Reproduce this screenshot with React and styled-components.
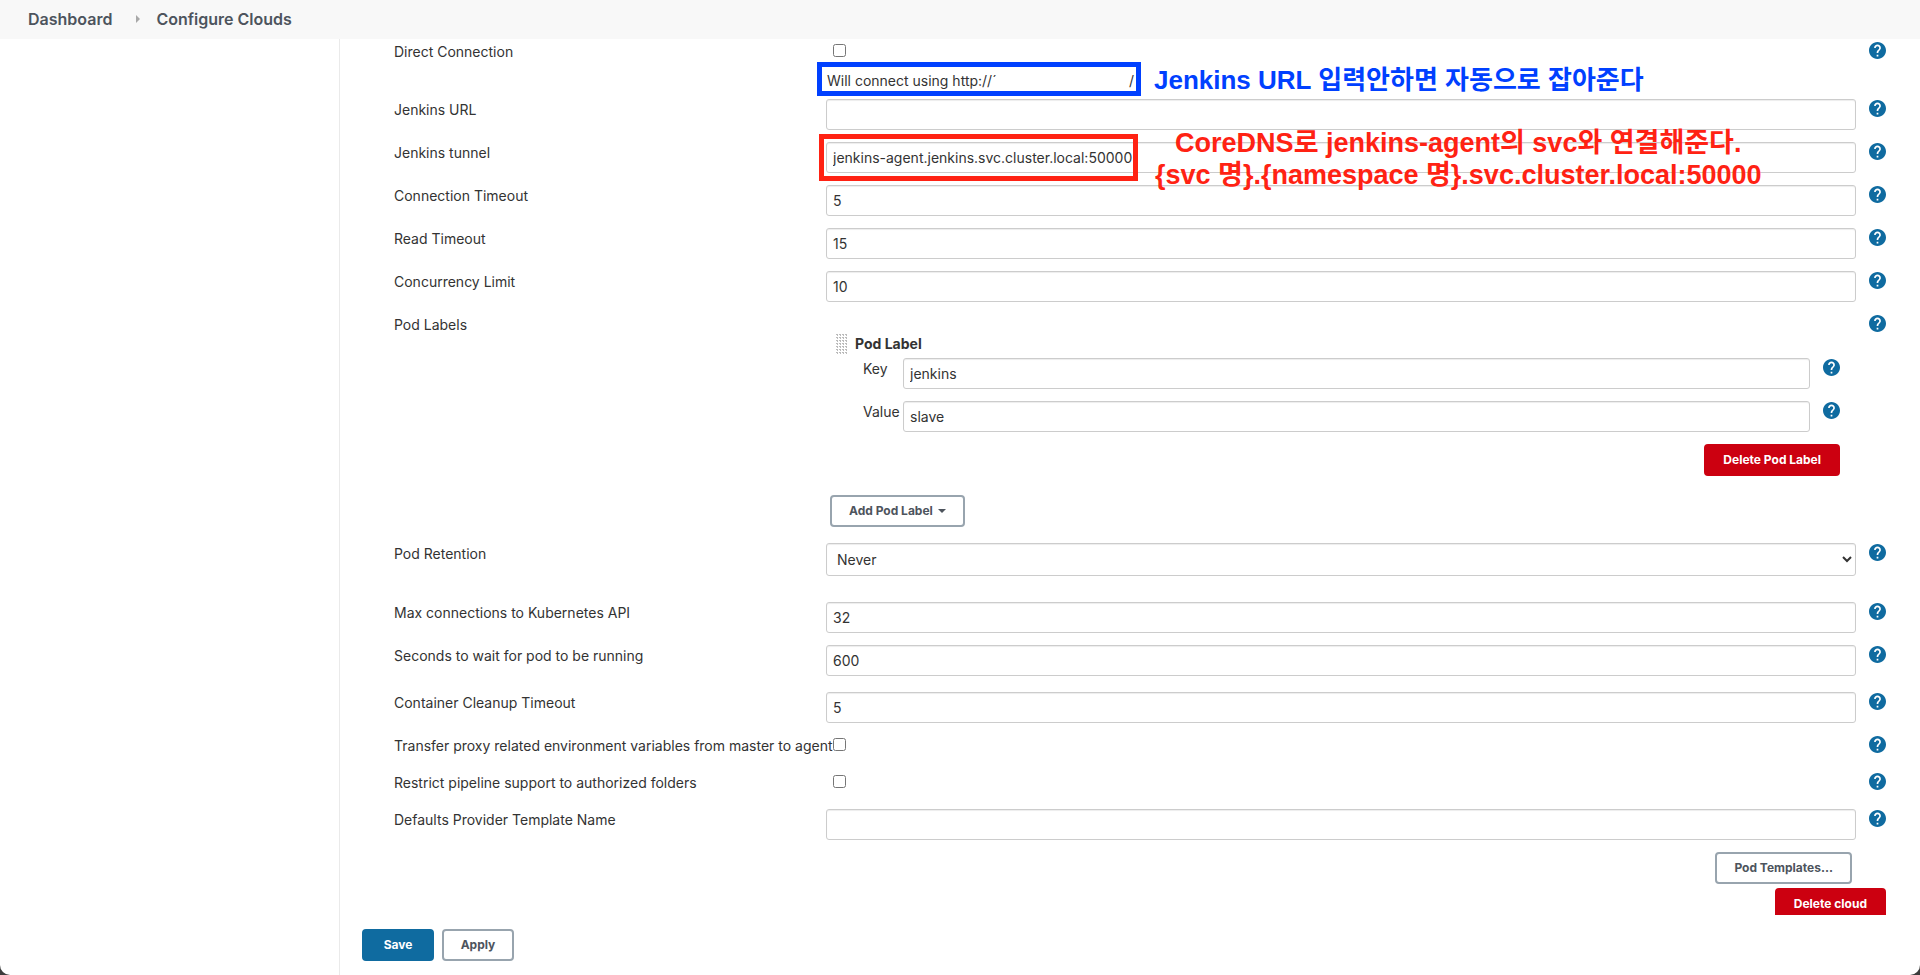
import React from 'react';
import styled, { createGlobalStyle, css } from 'styled-components';

const GlobalStyle = createGlobalStyle`
  *, *::before, *::after { box-sizing: border-box; }
  body {
    margin: 0;
    background: #3c3c3c;
    color: #333;
    font: 14px/22px Inter, "Noto Sans CJK KR", sans-serif;
  }
`;

const Page = styled.div`
  display: flex;
  flex-direction: column;
  height: 100vh;
  overflow: hidden;
  background: #fff;
  border-radius: 0 0 10px 10px;
`;

const Breadcrumbs = styled.nav`
  display: flex;
  align-items: center;
  flex: none;
  height: 39px;
  padding: 0 28px 2px;
  background: #f8f8f8;
`;

const Crumb = styled.a`
  color: #4d545d;
  font-size: 16px;
  font-weight: 600;
  text-decoration: none;
`;

const CrumbArrow = styled.svg`
  width: 4px;
  height: 8px;
  margin: 0 16px 0 24px;
  fill: #a8a8a8;
`;

const Body = styled.div`
  display: flex;
  flex: 1;
  min-height: 0;
`;

const SidePanel = styled.aside`
  flex: none;
  width: 340px;
  border-right: 1px solid #eaeaea;
`;

const Main = styled.form`
  display: flex;
  flex: 1;
  flex-direction: column;
  min-width: 0;
`;

const Scroller = styled.div`
  flex: 1;
  min-height: 0;
  padding: 2px 34px 0 54px;
  overflow-y: auto;
  scrollbar-width: none;
`;

const Row = styled.div`
  display: grid;
  grid-template-columns: ${(p) => (p.$nested ? '40px' : '432px')} minmax(0, 1fr) 30px;
  align-items: start;
  margin-bottom: ${(p) => p.$gap ?? 12}px;
`;

const Label = styled.label`
  white-space: nowrap;
`;

const Control = styled.div`
  position: relative;
  display: flex;
  grid-column: 2;
`;

const fieldBox = css`
  width: 100%;
  border: 1px solid #ccc;
  border-radius: 3px;
  background-color: #fff;
  box-shadow: inset 0 1px 1px rgba(0, 0, 0, 0.075);
  color: #333;
  font: inherit;
`;

const TextInput = styled.input`
  ${fieldBox}
  height: 31px;
  padding: 0 6px;
`;

const Select = styled.select`
  ${fieldBox}
  height: 33px;
  padding: 0 6px;
`;

const Checkbox = styled.input`
  width: 13px;
  height: 13px;
  margin: 3px 0 0 7px;
`;

const HelpLink = styled.a`
  justify-self: end;
  height: 17px;
  margin-top: 1px;
  color: #0f6ba0;

  svg {
    display: block;
    width: 17px;
    height: 17px;
    fill: currentColor;
  }
`;

const InfoText = styled.div`
  display: flex;
  justify-content: space-between;
  width: 308px;
  padding-left: 1px;
  white-space: nowrap;
`;

const Button = styled.button`
  height: 32px;
  padding: 0 17px;
  border: 2px solid ${(p) => p.$border};
  border-radius: 4px;
  background: ${(p) => p.$fill};
  color: ${(p) => p.$ink};
  font: 700 12px/20px Inter, sans-serif;
  white-space: nowrap;

  svg {
    width: 8px;
    height: 4px;
    margin-left: 5px;
    vertical-align: 2px;
    fill: currentColor;
  }
`;

const SecondaryButton = styled(Button).attrs({
  $border: '#98a4ae', $fill: '#fff', $ink: '#4d545d',
})``;
const DangerButton = styled(Button).attrs({
  $border: '#cc0010', $fill: '#cc0010', $ink: '#fff',
})``;
const PrimaryButton = styled(Button).attrs({
  $border: '#0f6ba0', $fill: '#0f6ba0', $ink: '#fff',
})``;

const Repeatable = styled.div`
  flex: 1;
  padding-top: 20px;
`;

const Chunk = styled.fieldset`
  min-width: 0;
  margin: 0 0 19px;
  padding: 0 16px 0 37px;
  border: 0;
`;

const ChunkHead = styled.div`
  display: flex;
  align-items: center;
  gap: 8px;
  height: 20px;
  margin: 0 0 4px -27px;
  font-weight: 700;
`;

const Grip = styled.svg`
  width: 11px;
  height: 20px;
`;

const Actions = styled.div`
  display: flex;
  justify-content: flex-end;
  margin-bottom: ${(p) => p.$gap ?? 0}px;
  padding-right: ${(p) => p.$inset ?? 0}px;
`;

const AddButton = styled(SecondaryButton)`
  display: block;
  margin-left: 4px;
`;

const SaveBar = styled.footer`
  display: flex;
  flex: none;
  gap: 8px;
  height: 60px;
  padding: 14px 22px;

  ${Button} { width: 72px; padding: 0; }
`;

const Highlight = styled.div`
  position: absolute;
  z-index: 1;
  top: ${(p) => p.$top}px;
  left: ${(p) => p.$left}px;
  width: ${(p) => p.$width}px;
  height: ${(p) => p.$height}px;
  border: 5px solid ${(p) => p.$color};
  pointer-events: none;
`;

const Note = styled.p`
  position: absolute;
  z-index: 1;
  top: ${(p) => p.$top}px;
  left: ${(p) => p.$left}px;
  margin: 0;
  color: ${(p) => p.$color};
  font: bold ${(p) => p.$size}px/32px "Liberation Sans", "Noto Sans CJK KR", sans-serif;
  text-align: center;
  white-space: nowrap;
  pointer-events: none;
`;

const BLUE = '#0040ff';
const RED = '#ff2213';

function Help({ topic }) {
  return (
    <HelpLink href="#help" aria-label={`Help for feature: ${topic}`}>
      <svg viewBox="2 2 20 20" aria-hidden="true">
        <path d="M12 2C6.48 2 2 6.48 2 12s4.480 10 10 10 10-4.480 10-10S17.520 2 12 2zm1 17h-2v-2h2v2zm2.070-7.750-.9.920C13.450 12.900 13 13.500 13 15h-2v-.5c0-1.100.45-2.100 1.170-2.830l1.240-1.260c.37-.36.59-.86.59-1.410 0-1.100-.9-2-2-2s-2 .9-2 2H8c0-2.210 1.790-4 4-4s4 1.790 4 4c0 .88-.36 1.680-.93 2.250z" />
      </svg>
    </HelpLink>
  );
}

function Field({ id, label, gap, nested, children }) {
  return (
    <Row $gap={gap} $nested={nested}>
      <Label htmlFor={id}>{label}</Label>
      <Control>{children}</Control>
      <Help topic={label} />
    </Row>
  );
}

function TextField({ id, label, value = '', gap, nested, children }) {
  return (
    <Field id={id} label={label} gap={gap} nested={nested}>
      <TextInput id={id} type="text" defaultValue={value} />
      {children}
    </Field>
  );
}

function CheckField({ id, label, gap = 15 }) {
  return (
    <Field id={id} label={label} gap={gap}>
      <Checkbox id={id} type="checkbox" />
    </Field>
  );
}

function GripDots() {
  const dots = [];
  for (let y = 0; y < 7; y += 1) {
    for (let x = 0; x < 4; x += 1) {
      dots.push(<rect key={`${x}-${y}`} x={x * 3} y={y * 3} width="2" height="1" />);
      dots.push(<rect key={`${x}-${y}b`} x={x * 3 + 1} y={y * 3 + 1} width="1" height="1" />);
    }
  }
  return <Grip viewBox="0 0 11 20" fill="#bbb" aria-hidden="true">{dots}</Grip>;
}

export default function App() {
  return (
    <>
      <GlobalStyle />
      <Page>
        <Breadcrumbs aria-label="Breadcrumb">
          <Crumb href="#dashboard">Dashboard</Crumb>
          <CrumbArrow viewBox="0 0 4 8" aria-hidden="true"><path d="M0 0l4 4-4 4z" /></CrumbArrow>
          <Crumb href="#clouds">Configure Clouds</Crumb>
        </Breadcrumbs>
        <Body>
          <SidePanel />
          <Main onSubmit={(e) => e.preventDefault()}>
            <Scroller>
              <CheckField id="direct" label="Direct Connection" gap={7} />
              <Row $gap={7}>
                <Control>
                  <InfoText>
                    <span>Will connect using http://´</span>
                    <span>/</span>
                  </InfoText>
                  <Highlight $color={BLUE} $top={-8} $left={-9} $width={324} $height={34} />
                  <Note $color={BLUE} $size={26} $top={-6} $left={328}>Jenkins URL 입력안하면 자동으로 잡아준다</Note>
                </Control>
              </Row>
              <TextField id="url" label="Jenkins URL" />
              <TextField id="tunnel" label="Jenkins tunnel" value="jenkins-agent.jenkins.svc.cluster.local:50000">
                <Highlight $color={RED} $top={-8} $left={-7} $width={319} $height={47} />
                <Note $color={RED} $size={27} $top={-15} $left={329}>
                  CoreDNS로 jenkins-agent의 svc와 연결해준다.
                  <br />
                  {'{svc 명}.{namespace 명}.svc.cluster.local:50000'}
                </Note>
              </TextField>
              <TextField id="connect-timeout" label="Connection Timeout" value="5" />
              <TextField id="read-timeout" label="Read Timeout" value="15" />
              <TextField id="concurrency" label="Concurrency Limit" value="10" />
              <Row $gap={16}>
                <span>Pod Labels</span>
                <Control>
                  <Repeatable>
                    <Chunk aria-label="Pod Label">
                      <ChunkHead>
                        <GripDots />
                        Pod Label
                      </ChunkHead>
                      <TextField nested id="label-key" label="Key" value="jenkins" />
                      <TextField nested id="label-value" label="Value" value="slave" />
                      <Actions>
                        <DangerButton type="button">Delete Pod Label</DangerButton>
                      </Actions>
                    </Chunk>
                    <AddButton type="button">
                      Add Pod Label
                      <svg viewBox="0 0 8 4" aria-hidden="true"><path d="M0 0h8L4 4z" /></svg>
                    </AddButton>
                  </Repeatable>
                </Control>
                <Help topic="Pod Labels" />
              </Row>
              <Field id="retention" label="Pod Retention" gap={26}>
                <Select id="retention" defaultValue="Never">
                  <option>Never</option>
                </Select>
              </Field>
              <TextField id="max-connections" label="Max connections to Kubernetes API" value="32" />
              <TextField id="wait" label="Seconds to wait for pod to be running" value="600" gap={16} />
              <TextField id="cleanup" label="Container Cleanup Timeout" value="5" />
              <CheckField id="proxy" label="Transfer proxy related environment variables from master to agent" />
              <CheckField id="restrict" label="Restrict pipeline support to authorized folders" />
              <TextField id="template" label="Defaults Provider Template Name" />
              <Actions $gap={4} $inset={34}>
                <SecondaryButton type="button">Pod Templates...</SecondaryButton>
              </Actions>
              <Actions>
                <DangerButton type="button">Delete cloud</DangerButton>
              </Actions>
            </Scroller>
            <SaveBar>
              <PrimaryButton type="submit">Save</PrimaryButton>
              <SecondaryButton type="button">Apply</SecondaryButton>
            </SaveBar>
          </Main>
        </Body>
      </Page>
    </>
  );
}
